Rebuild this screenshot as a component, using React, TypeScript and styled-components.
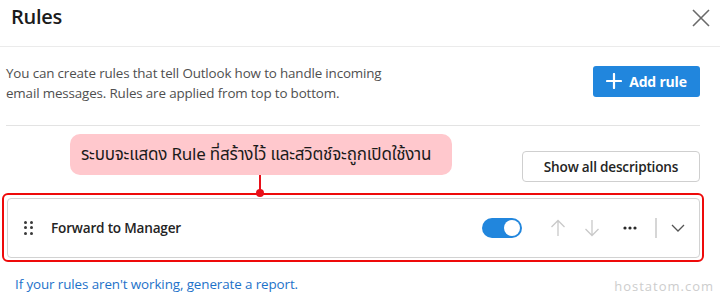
import React from "react";
import styled, { createGlobalStyle } from "styled-components";

const Global = createGlobalStyle`
  html, body { margin: 0; padding: 0; background: #fff; }
  body { font-family: "Open Sans", "Noto Sans Thai", "Noto Sans", sans-serif; }
  * { box-sizing: border-box; }
`;

const Page = styled.div`
  position: relative;
  width: 720px;
  height: 299px;
  overflow: hidden;
  background: #fff;
`;

const Header = styled.div`
  height: 47px;
  display: flex;
  align-items: flex-start;
  justify-content: space-between;
  padding: 3px 9px 0 11px;
  border-bottom: 1px solid #ebebeb;
`;

const Title = styled.h1`
  margin: 0;
  font-size: 20px;
  font-weight: 600;
  color: #1b1b1b;
  letter-spacing: -0.3px;
`;

const CloseButton = styled.button`
  border: none;
  background: none;
  padding: 0;
  margin-top: 5px;
  width: 20px;
  height: 20px;
  display: flex;
  align-items: center;
  justify-content: center;
  color: #6a6a6a;
`;

const Body = styled.div`
  padding: 0 20px 0 6px;
`;

const IntroRow = styled.div`
  display: flex;
  justify-content: space-between;
  align-items: flex-start;
  padding: 16px 0 0 0;
  height: 79px;
  border-bottom: 1px solid #e3e3e3;
`;

const Intro = styled.p`
  margin: 0;
  font-size: 13.4px;
  line-height: 20px;
  color: #4f4f4f;
  width: 400px;
  letter-spacing: -0.15px;
`;

const PrimaryButton = styled.button`
  margin-top: 3px;
  width: 107px;
  height: 31px;
  border: none;
  border-radius: 3px;
  background: #2186dd;
  color: #fff;
  font-family: inherit;
  font-size: 14px;
  font-weight: 700;
  display: flex;
  align-items: center;
  justify-content: center;
  gap: 7px;
  letter-spacing: -0.2px;
  padding: 0 0 1px 0;
`;

const ToolRow = styled.div`
  display: flex;
  justify-content: space-between;
  align-items: flex-start;
  padding-top: 8px;
  height: 67px;
`;

const Callout = styled.div`
  position: relative;
  margin-left: 64px;
  width: 382px;
  height: 41px;
  background: #ffc8cd;
  border-radius: 10px;
  display: flex;
  align-items: center;
  padding-left: 11px;
  font-family: "Noto Sans Thai", "Noto Sans", sans-serif;
  font-size: 17px;
  color: #1a1a1a;
  letter-spacing: -0.2px;
`;

const Connector = styled.div`
  position: absolute;
  left: 189px;
  top: 41px;
  width: 2px;
  height: 18px;
  background: #e8101a;
  &::after {
    content: "";
    position: absolute;
    left: -3px;
    bottom: -4px;
    width: 8px;
    height: 8px;
    border-radius: 50%;
    background: #e8101a;
  }
`;

const SecondaryButton = styled.button`
  margin-top: 17px;
  width: 178px;
  height: 31px;
  border: 1px solid #cfcfcf;
  border-radius: 4px;
  background: #fff;
  color: #242424;
  font-family: inherit;
  font-size: 13.6px;
  font-weight: 600;
  letter-spacing: -0.2px;
`;

const Highlight = styled.div`
  margin-left: -4px;
  margin-right: -4px;
  border: 2.5px solid #ee0a0a;
  border-radius: 6px;
  padding: 2.5px 2.5px;
`;

const RuleCard = styled.div`
  height: 60px;
  border: 1px solid #d2d2d2;
  border-radius: 4px;
  display: flex;
  align-items: center;
  padding: 0 11px 0 16px;
`;

const Grip = styled.div`
  display: grid;
  grid-template-columns: repeat(2, 3px);
  grid-template-rows: repeat(3, 3px);
  column-gap: 3.5px;
  row-gap: 2.5px;
  margin-right: 18px;
  span {
    width: 3px;
    height: 3px;
    border-radius: 50%;
    background: #3a3a3a;
  }
`;

const RuleName = styled.div`
  flex: 1;
  font-size: 13.6px;
  font-weight: 600;
  color: #242424;
  letter-spacing: -0.2px;
`;

const Toggle = styled.div<{ $on: boolean }>`
  width: 40px;
  height: 20px;
  border-radius: 10px;
  background: ${(p) => (p.$on ? "#2186dd" : "#bbb")};
  position: relative;
  margin-right: 19px;
  &::after {
    content: "";
    position: absolute;
    top: 2px;
    left: ${(p) => (p.$on ? "22px" : "2px")};
    width: 16px;
    height: 16px;
    border-radius: 50%;
    background: #fff;
  }
`;

const IconButton = styled.button<{ $muted?: boolean; $w?: number; $gap?: number }>`
  border: none;
  background: none;
  padding: 0;
  width: ${(p) => p.$w ?? 34}px;
  margin-right: ${(p) => p.$gap ?? 0}px;
  height: 24px;
  display: flex;
  align-items: center;
  justify-content: center;
  color: ${(p) => (p.$muted ? "#c9c9c9" : "#333")};
`;

const VDivider = styled.div`
  width: 2px;
  height: 20px;
  background: #d6d6d6;
  margin: 0 11px 0 8px;
`;

const Footer = styled.a`
  display: block;
  margin: 13px 0 0 9px;
  font-size: 13.4px;
  color: #1d72c9;
  text-decoration: none;
  letter-spacing: -0.1px;
`;

const Watermark = styled.div`
  position: absolute;
  right: 6px;
  bottom: 4px;
  font-family: "Open Sans", sans-serif;
  font-size: 13px;
  color: #cdcdcd;
  letter-spacing: 1px;
`;

export default function App() {
  return (
    <Page>
      <Global />
      <Header>
        <Title>Rules</Title>
        <CloseButton aria-label="Close">
          <svg width="18" height="18" viewBox="0 0 18 18">
            <path d="M1 1 L17 17 M17 1 L1 17" stroke="currentColor" strokeWidth="1.6" />
          </svg>
        </CloseButton>
      </Header>
      <Body>
        <IntroRow>
          <Intro>
            You can create rules that tell Outlook how to handle incoming email messages. Rules are applied from top to bottom.
          </Intro>
          <PrimaryButton>
            <svg width="16" height="16" viewBox="0 0 16 16">
              <path d="M8 1 V15 M1 8 H15" stroke="#fff" strokeWidth="2.2" strokeLinecap="round" />
            </svg>
            Add rule
          </PrimaryButton>
        </IntroRow>
        <ToolRow>
          <Callout>
            ระบบจะแสดง Rule ที่สร้างไว้ และสวิตช์จะถูกเปิดใช้งาน
            <Connector />
          </Callout>
          <SecondaryButton>Show all descriptions</SecondaryButton>
        </ToolRow>
        <Highlight>
          <RuleCard>
            <Grip>
              <span /><span /><span /><span /><span /><span />
            </Grip>
            <RuleName>Forward to Manager</RuleName>
            <Toggle $on />
            <IconButton $muted aria-label="Move up">
              <svg width="16" height="18" viewBox="0 0 16 18">
                <path d="M8 17 V1.5 M1.5 8 L8 1.5 L14.5 8" stroke="currentColor" strokeWidth="1.3" fill="none" />
              </svg>
            </IconButton>
            <IconButton $muted $gap={4} aria-label="Move down">
              <svg width="16" height="18" viewBox="0 0 16 18">
                <path d="M8 1 V16.5 M1.5 10 L8 16.5 L14.5 10" stroke="currentColor" strokeWidth="1.3" fill="none" />
              </svg>
            </IconButton>
            <IconButton aria-label="More">
              <svg width="14" height="4" viewBox="0 0 14 4">
                <circle cx="2" cy="2" r="1.6" fill="#2a2a2a" />
                <circle cx="7" cy="2" r="1.6" fill="#2a2a2a" />
                <circle cx="12" cy="2" r="1.6" fill="#2a2a2a" />
              </svg>
            </IconButton>
            <VDivider />
            <IconButton $w={20} aria-label="Expand">
              <svg width="14" height="8" viewBox="0 0 14 8">
                <path d="M1 1 L7 7 L13 1" stroke="#555" strokeWidth="1.3" fill="none" />
              </svg>
            </IconButton>
          </RuleCard>
        </Highlight>
        <Footer href="#">If your rules aren't working, generate a report.</Footer>
      </Body>
      <Watermark>hostatom.com</Watermark>
    </Page>
  );
}
